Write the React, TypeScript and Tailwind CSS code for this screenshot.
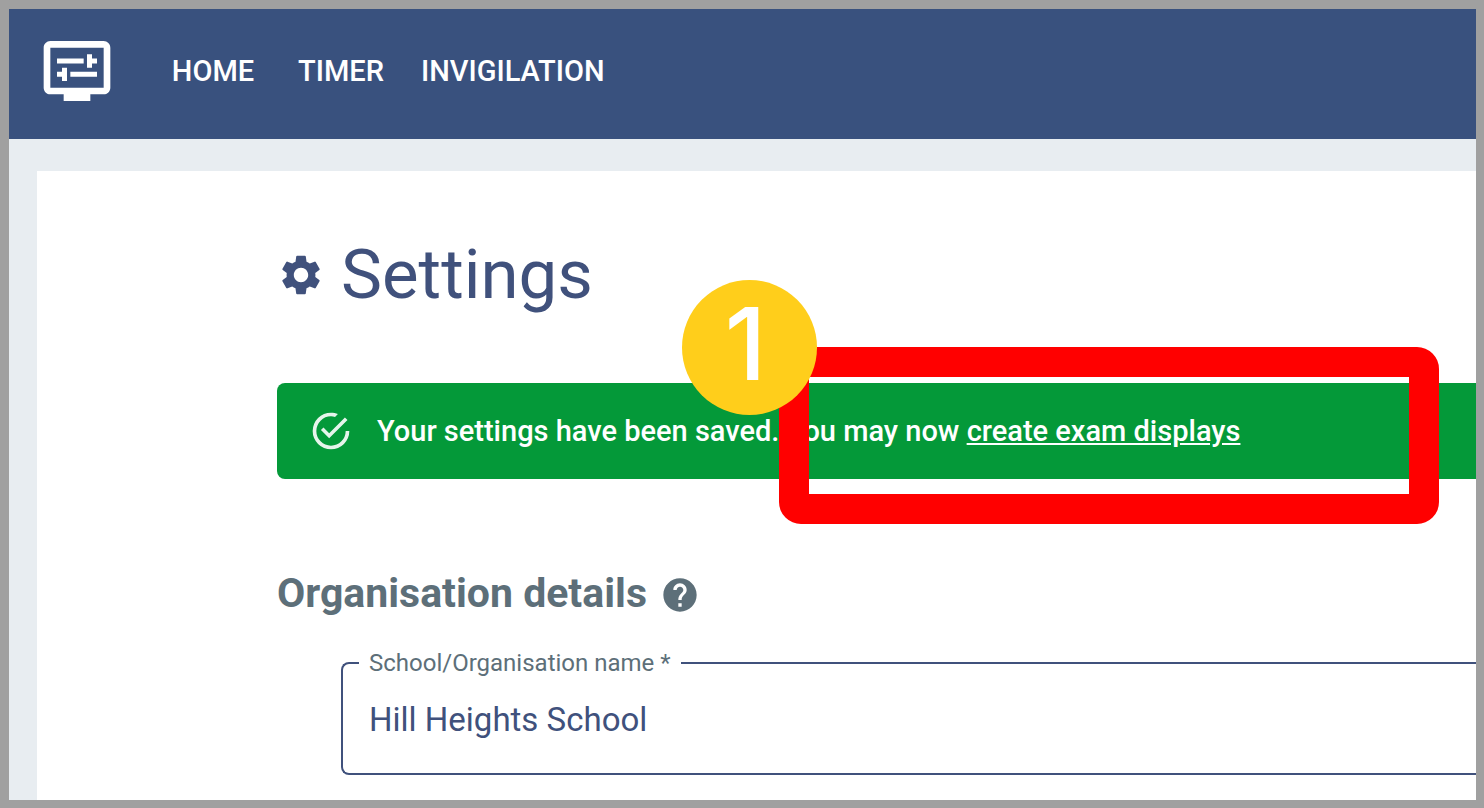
import React from "react";
import { MdHelp, MdSettings } from "react-icons/md";

function DisplayLogo() {
  return (
    <svg viewBox="0 0 24 24" className="size-20" fill="currentColor" aria-hidden="true">
      <path
        fillRule="evenodd"
        d="M20 3H4c-1.1 0-2 .9-2 2v12c0 1.1.9 2 2 2h4v2h8v-2h4c1.1 0 2-.9 2-2V5c0-1.1-.9-2-2-2zm0 14H4V5h16z"
      />
      <path d="M6 8.25h8v1.5H6zM16.5 9.75H18v-1.5h-1.5V7H15v4h1.5zM10 12.25h8v1.5h-8zM7.5 15H9v-4H7.5v1.25H6v1.5h1.5z" />
    </svg>
  );
}

function SuccessIcon() {
  return (
    <svg viewBox="0 0 24 24" className="size-11 shrink-0 opacity-90" fill="currentColor" aria-hidden="true">
      <path d="M20,12A8,8 0 0,1 12,20A8,8 0 0,1 4,12A8,8 0 0,1 12,4C12.76,4 13.5,4.11 14.2,4.31L15.77,2.74C14.61,2.26 13.34,2 12,2A10,10 0 0,0 2,12A10,10 0 0,0 12,22A10,10 0 0,0 22,12M7.91,10.08L6.5,11.5L11,16L21,6L19.59,4.58L11,13.17L7.91,10.08Z" />
    </svg>
  );
}

function NavLink({ href, children }: { href: string; children: React.ReactNode }) {
  return (
    <a href={href} className="min-w-32 px-4 text-center">
      {children}
    </a>
  );
}

function Header() {
  return (
    <header className="flex items-center bg-[#39517e] px-7 pt-[22px] pb-7 text-white">
      <a href="#" aria-label="Exam displays">
        <DisplayLogo />
      </a>
      <nav className="ml-8 flex text-[29px] leading-10 font-medium">
        <NavLink href="#home">HOME</NavLink>
        <NavLink href="#timer">TIMER</NavLink>
        <NavLink href="#invigilation">INVIGILATION</NavLink>
      </nav>
    </header>
  );
}

function SavedAlert() {
  return (
    <div className="relative mt-17">
      <div
        role="alert"
        className="flex h-24 items-center gap-6 rounded-l-lg bg-[#049939] px-8 text-[29px] leading-10 font-medium text-white"
      >
        <SuccessIcon />
        <p className="whitespace-nowrap">
          Your settings have been saved. You may now{" "}
          <a href="#displays" className="underline">
            create exam displays
          </a>
        </p>
      </div>
      <div className="pointer-events-none absolute -top-9 left-[502px] h-[177px] w-[660px] rounded-[22px] border-[30px] border-[#ff0000]" />
      <div className="absolute -top-[103px] left-[405px] flex size-[135px] items-center justify-center rounded-full bg-[#ffce1b] pr-2 pb-2 font-['Inter',sans-serif] text-[100px] leading-none font-medium text-white">
        1
      </div>
    </div>
  );
}

export default function App() {
  return (
    <div className="flex min-h-screen flex-col overflow-hidden border-8 border-t-9 border-l-9 border-[#a0a0a0] bg-[#e8edf1] font-['Roboto',sans-serif]">
      <Header />
      <main className="mt-8 ml-7 grow bg-white pt-16 pb-6 pl-60">
        <h1 className="flex items-center gap-4 text-[69px] leading-20 text-[#40517c]">
          <MdSettings className="size-12" aria-hidden="true" />
          Settings
        </h1>
        <SavedAlert />
        <section className="mt-[88px]">
          <div className="flex items-center gap-[13px] text-[#5d6f79]">
            <h2 className="pb-1 text-[41px] leading-[52px] font-bold">Organisation details</h2>
            <button type="button" aria-label="Help with organisation details">
              <MdHelp className="size-10" />
            </button>
          </div>
          <fieldset className="mt-[26px] ml-16 rounded-l-lg border-2 border-r-0 border-[#40517c] pl-4">
            <legend className="px-[10px] text-[24px] leading-7 text-[#5d6f79]">
              <label htmlFor="organisation">School/Organisation name *</label>
            </legend>
            <input
              id="organisation"
              type="text"
              required
              defaultValue="Hill Heights School"
              className="mb-3 block h-[84px] w-full bg-transparent px-[10px] text-[33px] text-[#40517c] outline-none"
            />
          </fieldset>
        </section>
      </main>
    </div>
  );
}
